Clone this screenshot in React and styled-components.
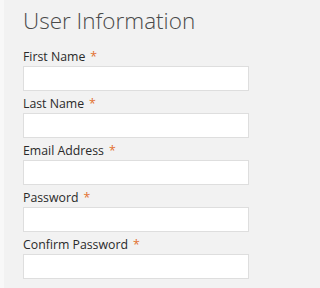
import React from "react";
import styled, { createGlobalStyle } from "styled-components";

const Global = createGlobalStyle`
  html, body { margin: 0; padding: 0; background: #f8f8f8; }
  body { font-family: "Open Sans", "Liberation Sans", sans-serif; }
`;

const Page = styled.div`
  min-height: 100vh;
  padding-left: 4px;
  box-sizing: border-box;
  display: flex;
`;

const Panel = styled.form`
  flex: 1;
  background: #f2f2f2;
  padding: 6px 0 0 19px;
  box-sizing: border-box;
`;

const Title = styled.h2`
  margin: 0 0 12px;
  font-size: 22.5px;
  line-height: 30px;
  font-weight: 300;
  color: #4a4a4a;
`;

const Field = styled.div`
  display: flex;
  flex-direction: column;
  margin-bottom: 4px;
`;

const Label = styled.label`
  font-size: 12.3px;
  line-height: 18px;
  color: #2a2a2a;
`;

const Req = styled.span`
  color: #e2702f;
  margin-left: 5px;
`;

const Input = styled.input`
  width: 226px;
  height: 25px;
  box-sizing: border-box;
  border: 1px solid #dedede;
  background: #fff;
  outline: none;
  padding: 0 6px;
  font-family: inherit;
`;

const fields = [
  { label: "First Name", type: "text" },
  { label: "Last Name", type: "text" },
  { label: "Email Address", type: "email" },
  { label: "Password", type: "password" },
  { label: "Confirm Password", type: "password" },
];

export default function App() {
  return (
    <>
      <Global />
      <Page>
        <Panel>
          <Title>User Information</Title>
          {fields.map((f) => (
            <Field key={f.label}>
              <Label>
                {f.label}
                <Req>*</Req>
              </Label>
              <Input type={f.type} />
            </Field>
          ))}
        </Panel>
      </Page>
    </>
  );
}
